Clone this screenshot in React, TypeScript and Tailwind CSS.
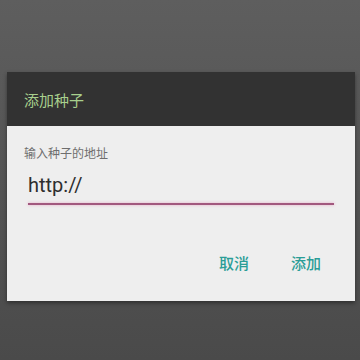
import React from "react";

export default function App() {
  return (
    <div
      className="w-[360px] h-[360px] bg-gradient-to-b from-[#5e5e5e] to-[#4a4a4a] pt-[72px] pl-[7px]"
      style={{ fontFamily: '"Noto Sans CJK SC", "Liberation Sans", sans-serif' }}
    >
      <div className="w-[348px] shadow-[0_2px_4px_rgba(0,0,0,0.4)]">
        <div className="h-[54px] bg-[#323232] flex items-center pl-[17px] pt-[2px]">
          <span className="text-[15px] text-[#a8d08d]">添加种子</span>
        </div>
        <div className="h-[175px] bg-[#eeeeee] flex flex-col pl-[17px] pr-[21px]">
          <div className="mt-[19px] text-[12px] leading-[16px] text-[#6e6e6e]">输入种子的地址</div>
          <div className="mt-[11px] ml-[4px] text-[20px] leading-[26px] text-[#2e2e2e]" style={{ fontFamily: '"Roboto", "Liberation Sans", sans-serif' }}>
            http://
          </div>
          <div className="mt-[5px] ml-[4px] h-[2px] bg-[#a2587e] shadow-[0_0_3px_rgba(230,120,170,0.6)]" />
          <div className="mt-[47px] flex justify-end gap-[42px] pr-[13px]">
            <span className="text-[15px] font-medium text-[#2a9d96]">取消</span>
            <span className="text-[15px] font-medium text-[#2a9d96]">添加</span>
          </div>
        </div>
      </div>
    </div>
  );
}
